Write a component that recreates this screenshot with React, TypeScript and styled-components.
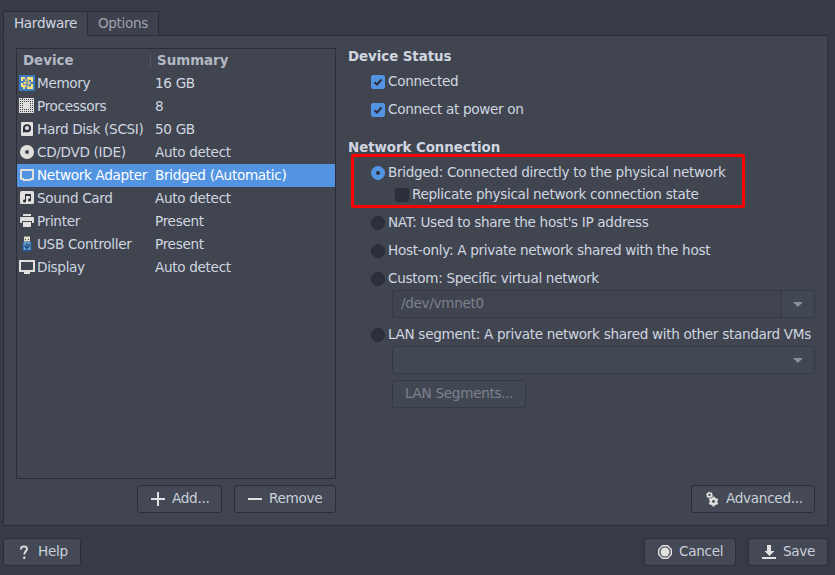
import React from "react";
import styled, { createGlobalStyle } from "styled-components";

const c = {
  window: "#383a48",
  panel: "#404550",
  border: "#2b2e39",
  button: "#444955",
  text: "#d0d6e0",
  muted: "#b3b8c4",
  disabled: "#7c818c",
  blue: "#5294e2",
  icon: "#e2e0de",
  dark: "#2d303b",
};

const GlobalStyle = createGlobalStyle`
  * { box-sizing: border-box; }
  html, body { margin: 0; background: ${c.window}; overflow: hidden; }
  body { font: 13.6px/16px "DejaVu Sans", sans-serif; letter-spacing: -0.325px; color: ${c.text}; }
  svg { display: block; flex: none; }
`;

const Dialog = styled.main`
  width: 835px;
  height: 575px;
  padding: 11px 7px 9px 3px;
  display: flex;
  flex-direction: column;
`;

const Tabs = styled.nav`
  display: flex;
  height: 25px;
  margin-bottom: -1px;
  position: relative;
`;

const Tab = styled.button<{ $active?: boolean; $width: number }>`
  all: unset;
  box-sizing: border-box;
  width: ${(p) => p.$width}px;
  height: 25px;
  padding-bottom: 1px;
  text-align: center;
  white-space: nowrap;
  letter-spacing: -0.325px;
  line-height: 16px;
  border: 1px solid ${c.border};
  border-bottom-color: ${(p) => (p.$active ? c.panel : c.border)};
  background: ${(p) => (p.$active ? c.panel : "#3d404d")};
  color: ${(p) => (p.$active ? c.text : "#9ea2af")};
  & + & { margin-left: -1px; }
`;

const Panel = styled.section`
  height: 491px;
  border: 1px solid ${c.border};
  background: ${c.panel};
  padding: 12px;
  display: flex;
  gap: 12px;
`;

const Devices = styled.div`
  width: 320px;
  display: flex;
  flex-direction: column;
`;

const DeviceList = styled.div`
  height: 431px;
  border: 1px solid ${c.border};
`;

const ListHeader = styled.div`
  height: 23px;
  display: grid;
  grid-template-columns: 133px 1fr;
  padding-top: 3px;
  font-size: 13.4px;
  font-weight: bold;
  letter-spacing: 0;
  color: ${c.muted};
`;

const HeaderCell = styled.span`
  padding-left: 6px;
  line-height: 18px;
  & + & { border-left: 1px solid #555965; height: 13px; margin-top: 2px; line-height: 14px; }
`;

const DeviceRow = styled.div<{ $selected?: boolean }>`
  height: 23px;
  display: grid;
  grid-template-columns: 16px 118px 1fr;
  align-items: start;
  padding: 3px 0 0 2px;
  white-space: nowrap;
  background: ${(p) => (p.$selected ? c.blue : "transparent")};
  color: ${(p) => (p.$selected ? "#fff" : c.text)};
`;

const RowText = styled.span`
  padding-left: 2px;
`;

const Actions = styled.div`
  display: flex;
  justify-content: flex-end;
  gap: 12px;
  margin-top: 6px;
`;

const Button = styled.button<{ $width: number; $disabled?: boolean; $gap?: number }>`
  all: unset;
  box-sizing: border-box;
  width: ${(p) => p.$width}px;
  height: 28px;
  flex: none;
  display: flex;
  align-items: center;
  padding-left: ${(p) => (p.$disabled ? 12 : 13)}px;
  white-space: nowrap;
  letter-spacing: -0.3px;
  line-height: 16px;
  border: 1px solid ${(p) => (p.$disabled ? "#363a46" : c.border)};
  border-radius: 3px;
  background: ${(p) => (p.$disabled ? "#424754" : c.button)};
  color: ${(p) => (p.$disabled ? c.disabled : "#c9d0db")};
  gap: ${(p) => p.$gap ?? 7}px;
`;

const ButtonText = styled.span`
  margin-bottom: 2px;
`;

const Settings = styled.div`
  flex: 1;
  display: flex;
  flex-direction: column;
`;

const Heading = styled.h2`
  font-size: 13.4px;
  height: 16px;
  line-height: 18px;
  font-weight: bold;
  letter-spacing: -0.06px;
  margin: 0;
`;

const Option = styled.label<{ $top: number; $indent?: number }>`
  height: 16px;
  margin-top: ${(p) => p.$top}px;
  margin-left: ${(p) => p.$indent ?? 23}px;
  display: flex;
  gap: 3px;
  white-space: nowrap;
`;

const Mark = styled.i<{ $on?: boolean; $round?: boolean }>`
  width: 14px;
  height: 14px;
  margin-top: 2px;
  flex: none;
  border-radius: ${(p) => (p.$round ? "50%" : "2px")};
  border: 1px solid ${(p) => (p.$on ? c.blue : "#292c36")};
  background: ${(p) => (p.$on ? c.blue : c.dark)};
  display: grid;
  place-items: center;
`;

const Dot = styled.b`
  width: 4px;
  height: 4px;
  border-radius: 50%;
  background: ${c.dark};
`;

const Highlight = styled.div`
  position: absolute;
  left: 351px;
  top: 154px;
  width: 394px;
  height: 54px;
  border: 3px solid #ff0000;
  border-radius: 2px;
`;

const Combo = styled.div<{ $editable?: boolean; $top: number }>`
  width: 423px;
  height: 28px;
  margin: ${(p) => p.$top}px 0 0 44px;
  display: flex;
  border: 1px solid #363a46;
  border-radius: 3px;
  overflow: hidden;
  color: ${c.disabled};
  background: ${(p) => (p.$editable ? "#3f444f" : "#424754")};
`;

const ComboValue = styled.span`
  flex: 1;
  padding: 4px 8px;
`;

const ComboArrow = styled.span<{ $divided?: boolean }>`
  width: 33px;
  display: grid;
  place-items: center;
  background: #424754;
  border-left: 1px solid ${(p) => (p.$divided ? "#363a46" : "transparent")};
`;

const LanAction = styled.div`
  margin: 6px 0 0 44px;
`;

const AdvancedAction = styled.div`
  display: flex;
  justify-content: flex-end;
  margin-top: auto;
`;

const Footer = styled.footer`
  display: flex;
  margin-top: 12px;
  gap: 12px;
`;

const Spacer = styled.div`
  flex: 1;
`;

const Svg = ({ children, size = 16, crisp }: { children: React.ReactNode; size?: number; crisp?: boolean }) => (
  <svg width={size} height={size} viewBox={`0 0 ${size} ${size}`} fill={c.icon} shapeRendering={crisp ? "crispEdges" : undefined}>
    {children}
  </svg>
);

const pins = [1, 3, 5, 7, 9, 11, 13];

const icons: Record<string, React.ReactNode> = {
  memory: (
    <Svg>
      <rect width="16" height="16" rx=".5" fill="#3b7bc0" />
      <path fill="#ffe07a" d="M2 2h4v2H4v2H2zM8 2h6v5h-2V5h-2V4H8zM2 8h2v2h2v4H4v-2H2zM12 9h2v5H8v-2h3v-1h1z" />
      <path fill="#e3cd78" d="M6 4h1.600v2.500H6zM8.500 4H10v2.500H8.500zM4.500 6.700h3v2.600h-3zM8.500 6.700h3v2.600h-3zM6 10h1.600v2H6zM8.500 10H10v2H8.500z" />
    </Svg>
  ),
  cpu: (
    <Svg crisp>
      <rect width="15" height="15" fill="#deddda" />
      {pins.map((p) => (
        <React.Fragment key={p}>
          {[1, 3, 11, 13].map((q) => (
            <React.Fragment key={q}>
              <rect x={p} y={q} width="1" height="1" fill={c.panel} />
              <rect x={q} y={p} width="1" height="1" fill={c.panel} />
            </React.Fragment>
          ))}
        </React.Fragment>
      ))}
      <rect x="4" y="4" width="7" height="7" />
      <rect x="3" width="1" height="1" fill={c.panel} />
    </Svg>
  ),
  disk: (
    <Svg>
      <rect x="2" y="1" width="12" height="14" rx="1" />
      <path d="M4 11.500V7a4 4 0 1 1 4 4.300H6z" fill={c.dark} />
      <circle cx="8" cy="7" r="2" />
    </Svg>
  ),
  cd: (
    <Svg>
      <path fillRule="evenodd" d="M8 1a7 7 0 1 0 0 14A7 7 0 0 0 8 1m0 5a2 2 0 1 1 0 4 2 2 0 0 1 0-4" />
    </Svg>
  ),
  net: (
    <Svg>
      <path fillRule="evenodd" d="M2 2h12q1 0 1 1v9q0 1-1 1h-2v1H4v-1H2q-1 0-1-1V3q0-1 1-1m1 2v7h2v1h6v-1h2V4z" />
    </Svg>
  ),
  sound: (
    <Svg>
      <rect x="1" y="1" width="14" height="13" rx="1.5" />
      <path d="M6 4h6v6a1.500 1.500 0 1 1-1-1.400V6H7v5a1.500 1.500 0 1 1-1-1.400z" fill={c.dark} />
    </Svg>
  ),
  printer: (
    <Svg>
      <path d="M4 1h8v2H4zM2 4h12q1 0 1 1v4q0 1-1 1h-1V8H3v2H2q-1 0-1-1V5q0-1 1-1" />
      <path d="M4 9h8v5H4z" />
    </Svg>
  ),
  usb: (
    <Svg>
      <rect x="5" y="0.500" width="6" height="5.500" fill="#deddc8" />
      <path d="M6 3h1v1H6zM9 3h1v1H9z" fill="#444" />
      <path d="M3.500 5.500h9V14q0 1.500-1.500 1.500H5Q3.500 15.500 3.500 14z" fill="#255792" />
      <path d="M4.500 6h7v8h-7z" fill="#659dcf" />
      <path d="M8 7v7M6 9v2l2 1 2-1V8" stroke="#143d6d" fill="none" />
    </Svg>
  ),
  display: (
    <Svg crisp>
      <path fillRule="evenodd" d="M0 1h16v12h-5v2H5v-2H0zm2 2v8h12V3z" />
    </Svg>
  ),
};

const devices = [
  ["memory", "Memory", "16 GB"],
  ["cpu", "Processors", "8"],
  ["disk", "Hard Disk (SCSI)", "50 GB"],
  ["cd", "CD/DVD (IDE)", "Auto detect"],
  ["net", "Network Adapter", "Bridged (Automatic)"],
  ["sound", "Sound Card", "Auto detect"],
  ["printer", "Printer", "Present"],
  ["usb", "USB Controller", "Present"],
  ["display", "Display", "Auto detect"],
];

const Arrow = () => (
  <svg width="10" height="5" viewBox="0 0 10 5"><path d="M0 0h10L5 5z" fill="#8a8f9a" /></svg>
);

const Check = () => (
  <svg width="10" height="10" viewBox="0 0 10 10"><path d="M1.500 5.200 4 7.500l4.500-5" fill="none" stroke={c.dark} strokeWidth="2" /></svg>
);

const teeth = [0, 60, 120, 180, 240, 300];

export default function App() {
  return (
    <Dialog>
      <GlobalStyle />
      <Tabs>
        <Tab $active $width={85}>Hardware</Tab>
        <Tab $width={72}>Options</Tab>
      </Tabs>
      <Panel>
        <Devices>
          <DeviceList>
            <ListHeader>
              <HeaderCell>Device</HeaderCell>
              <HeaderCell>Summary</HeaderCell>
            </ListHeader>
            {devices.map(([icon, name, summary]) => (
              <DeviceRow key={name} $selected={icon === "net"}>
                {icons[icon]}
                <RowText>{name}</RowText>
                <RowText>{summary}</RowText>
              </DeviceRow>
            ))}
          </DeviceList>
          <Actions>
            <Button $width={85}>
              <Svg size={14} crisp><path d="M6 0h2v6h6v2H8v6H6V8H0V6h6z" /></Svg>
              <ButtonText>Add...</ButtonText>
            </Button>
            <Button $width={102}>
              <Svg size={14} crisp><path d="M0 6h14v2H0z" /></Svg>
              <ButtonText>Remove</ButtonText>
            </Button>
          </Actions>
        </Devices>
        <Settings>
          <Heading>Device Status</Heading>
          <Option $top={9}><Mark $on><Check /></Mark>Connected</Option>
          <Option $top={12}><Mark $on><Check /></Mark>Connect at power on</Option>
          <Option as="div" $top={22} $indent={0}><Heading>Network Connection</Heading></Option>
          <Option $top={9}><Mark $on $round><Dot /></Mark>Bridged: Connected directly to the physical network</Option>
          <Option $top={6} $indent={47}><Mark />Replicate physical network connection state</Option>
          <Option $top={12}><Mark $round />NAT: Used to share the host's IP address</Option>
          <Option $top={12}><Mark $round />Host-only: A private network shared with the host</Option>
          <Option $top={12}><Mark $round />Custom: Specific virtual network</Option>
          <Combo $editable $top={4}>
            <ComboValue>/dev/vmnet0</ComboValue>
            <ComboArrow $divided><Arrow /></ComboArrow>
          </Combo>
          <Option $top={8}><Mark $round />LAN segment: A private network shared with other standard VMs</Option>
          <Combo $top={4}>
            <ComboValue />
            <ComboArrow><Arrow /></ComboArrow>
          </Combo>
          <LanAction><Button $width={134} $disabled><ButtonText>LAN Segments...</ButtonText></Button></LanAction>
          <AdvancedAction>
            <Button $width={124} $gap={5}>
              <Svg>
                <circle cx="4.500" cy="4" r="2" fill="none" stroke={c.icon} strokeWidth="1.700" />
                <circle cx="4.500" cy="4" r="2.800" fill="none" stroke={c.icon} strokeWidth="1" strokeDasharray="1.460" />
                <circle cx="8.500" cy="10.500" r="2.700" fill="none" stroke={c.icon} strokeWidth="2.500" />
                {teeth.map((a) => (
                  <rect key={a} x="7.500" y="5.500" width="2" height="2.500" transform={`rotate(${a} 8.500 10.500)`} />
                ))}
              </Svg>
              <ButtonText>Advanced...</ButtonText>
            </Button>
          </AdvancedAction>
        </Settings>
      </Panel>
      <Footer>
        <Button $width={78}>
          <Svg size={14}><path d="M4 4.500V4q0-2.600 3-2.600t3 2.600c0 2-2.700 2.200-2.700 5.500" fill="none" stroke={c.icon} strokeWidth="1.900" /><path d="M6.300 11.500h2v2.500h-2z" /></Svg>
          <ButtonText>Help</ButtonText>
        </Button>
        <Spacer />
        <Button $width={92}>
          <Svg size={14}>
            <path d="M4.500.7h5l3.800 3.800v5l-3.800 3.800h-5L.7 9.500v-5z" fill="none" stroke={c.icon} strokeWidth="1.400" />
            <circle cx="7" cy="7" r="4.500" />
          </Svg>
          <ButtonText>Cancel</ButtonText>
        </Button>
        <Button $width={80}>
          <Svg size={14} crisp><path d="M5 0h4v6h3l-5 5-5-5h3zM0 12h14v2H0z" /></Svg>
          <ButtonText>Save</ButtonText>
        </Button>
      </Footer>
      <Highlight />
    </Dialog>
  );
}
